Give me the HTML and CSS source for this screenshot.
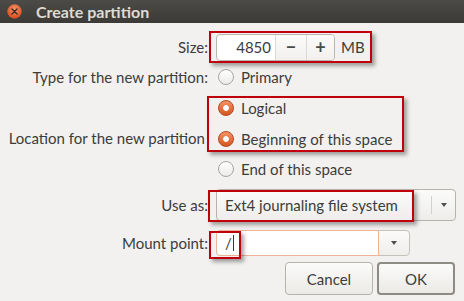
FILE: index.html
```html
<!DOCTYPE html>
<html lang="en">
<head>
    <meta charset="UTF-8">
    <title>Create partition</title>
    <link rel="stylesheet" href="styles.css">
</head>
<body>
    <div class="window">
        <div class="titlebar">
            <span class="close">
                <svg width="15" height="15" viewBox="0 0 15 15">
                    <defs>
                        <radialGradient id="cg" cx="50%" cy="35%" r="65%">
                            <stop offset="0" stop-color="#f6946a"/>
                            <stop offset="1" stop-color="#d8491c"/>
                        </radialGradient>
                    </defs>
                    <circle cx="7.5" cy="7.5" r="7.2" fill="url(#cg)"/>
                    <path d="M5 5 L10 10 M10 5 L5 10" stroke="#3a2a22" stroke-width="1.4" stroke-linecap="round"/>
                </svg>
            </span>
            <span class="title">Create partition</span>
        </div>

        <div class="form">
            <label class="lbl row-size">Size:</label>
            <div class="ctl row-size">
                <div class="spin">
                    <span class="spin-val">4850</span>
                    <span class="spin-btn">&minus;</span>
                    <span class="spin-btn">+</span>
                </div>
                <span class="unit">MB</span>
            </div>

            <label class="lbl row-type">Type for the new partition:</label>
            <div class="ctl row-type"><span class="radio"></span>Primary</div>

            <label class="lbl loc">Location for the new partition</label>
            <div class="ctl row-logical"><span class="radio on"></span>Logical</div>
            <div class="ctl row-begin"><span class="radio on"></span>Beginning of this space</div>
            <div class="ctl row-end"><span class="radio"></span>End of this space</div>

            <label class="lbl row-use">Use as:</label>
            <div class="ctl row-use">
                <div class="combo">
                    <span class="combo-text">Ext4 journaling file system</span>
                    <span class="combo-btn"><span class="arrow"></span></span>
                </div>
            </div>

            <label class="lbl row-mount">Mount point:</label>
            <div class="ctl row-mount">
                <div class="combo-entry">
                    <span class="entry-text">/<span class="caret"></span></span>
                    <span class="combo-btn"><span class="arrow"></span></span>
                </div>
            </div>
        </div>

        <div class="actions">
            <button class="btn cancel">Cancel</button>
            <button class="btn ok">OK</button>
        </div>

        <!-- red annotation boxes -->
        <div class="mark mark-size"></div>
        <div class="mark mark-loc"></div>
        <div class="mark mark-use"></div>
        <div class="mark mark-mount"></div>
    </div>
</body>
</html>
```

FILE: styles.css
```css
body {
    margin: 0;
    font-family: "Lato", "Noto Sans", sans-serif;
    font-size: 15px;
    color: #3c3c3c;
    background: #f2f1f0;
}
.window {
    position: relative;
    width: 464px;
    height: 301px;
    overflow: hidden;
    background: #f2f1f0;
}
.titlebar {
    height: 23px;
    display: flex;
    align-items: center;
    background: linear-gradient(#4c4b47, #3b3a36);
}
.close {
    width: 15px;
    height: 15px;
    margin-left: 7px;
    display: flex;
}
.title {
    margin-left: 14px;
    font-size: 16px;
    font-weight: bold;
    color: #dfdbd2;
}
.form {
    display: grid;
    grid-template-columns: 208px 1fr;
    grid-template-rows: 30px 30px 32px 30px 30px 42px 34px;
    column-gap: 8px;
    padding-top: 9px;
    align-items: center;
}
.lbl {
    grid-column: 1;
    text-align: right;
    white-space: nowrap;
}
.ctl {
    grid-column: 2;
    display: flex;
    align-items: center;
}
.row-size { grid-row: 1; }
.row-type { grid-row: 2; }
.row-logical { grid-row: 3; }
.row-begin { grid-row: 4; }
.row-end { grid-row: 5; }
.row-use { grid-row: 6; }
.row-mount { grid-row: 7; }
.loc {
    grid-row: 3 / span 3;
    padding-right: 3px;
}

/* spin button */
.spin {
    display: flex;
    height: 27px;
    border: 1px solid #b9b6b0;
    border-radius: 4px;
    background: #fff;
    box-sizing: border-box;
}
.spin-val {
    width: 58px;
    box-sizing: border-box;
    padding-right: 4px;
    text-align: right;
    line-height: 25px;
}
.spin-btn {
    width: 30px;
    border-left: 1px solid #dddad6;
    text-align: center;
    line-height: 24px;
    font-size: 18px;
    font-weight: bold;
    color: #4a4a4a;
    background: linear-gradient(#fbfbfa, #f1f0ee);
}
.spin-btn:last-child {
    width: 27px;
    border-radius: 0 3px 3px 0;
}
.unit {
    margin-left: 6px;
}

/* radios */
.radio {
    width: 16px;
    height: 16px;
    margin: 0 7px 0 2px;
    border-radius: 50%;
    box-sizing: border-box;
    border: 1px solid #a8a5a0;
    background: linear-gradient(#ffffff, #ecebe9);
}
.radio.on {
    border-color: #b7461c;
    background: radial-gradient(circle, #fff 0 2.5px, transparent 3.2px),
                linear-gradient(#f39366, #d4551f);
}

/* combo boxes */
.combo {
    display: flex;
    width: 240px;
    height: 32px;
    box-sizing: border-box;
    border: 1px solid #b6b3ad;
    border-radius: 4px;
    background: linear-gradient(#fbfbfa, #eeedeb);
}
.combo-text {
    flex: 1;
    padding-left: 8px;
    line-height: 30px;
}
.combo-btn {
    width: 23px;
    margin: 6px 0;
    border-left: 1px solid #d4d1cc;
    display: flex;
    align-items: center;
    justify-content: center;
}
.arrow {
    width: 0;
    height: 0;
    border-left: 3.5px solid transparent;
    border-right: 3.5px solid transparent;
    border-top: 4px solid #505050;
}
.combo-entry {
    display: flex;
    width: 194px;
    height: 26px;
    box-sizing: border-box;
    border: 1px solid #c4c1bb;
    border-radius: 4px;
    background: linear-gradient(#fbfbfa, #efeeec);
}
.entry-text {
    width: 163px;
    margin: -1px 0 -1px -1px;
    padding-left: 8px;
    box-sizing: border-box;
    border: 1px solid #efb497;
    border-radius: 4px 0 0 4px;
    background: #fff;
    line-height: 24px;
    display: flex;
    align-items: center;
}
.caret {
    width: 1px;
    height: 16px;
    margin-left: 1px;
    background: #333;
}
.combo-entry .combo-btn {
    flex: 1;
    margin: 0;
    border-left: none;
}

/* buttons */
.actions {
    display: flex;
    justify-content: flex-end;
    gap: 4px;
    padding: 2px 9px 0 0;
}
.btn {
    height: 33px;
    font-family: inherit;
    font-size: 15px;
    color: #3c3c3c;
    border: 1px solid #b6b3ad;
    border-radius: 4px;
    background: linear-gradient(#fbfbfa, #ebeae7);
}
.cancel { width: 88px; }
.ok {
    width: 78px;
    border: 2px solid #8e8b85;
}

/* annotations */
.mark {
    position: absolute;
    border: 2px solid #c0000a;
    box-sizing: border-box;
    box-shadow: 3px 3px 4px rgba(0, 0, 0, 0.35);
}
.mark-size { left: 209px; top: 31px; width: 163px; height: 32px; }
.mark-loc { left: 207px; top: 96px; width: 197px; height: 56px; }
.mark-use { left: 208px; top: 190px; width: 206px; height: 32px; }
.mark-mount { left: 209px; top: 231px; width: 32px; height: 28px; }
```
